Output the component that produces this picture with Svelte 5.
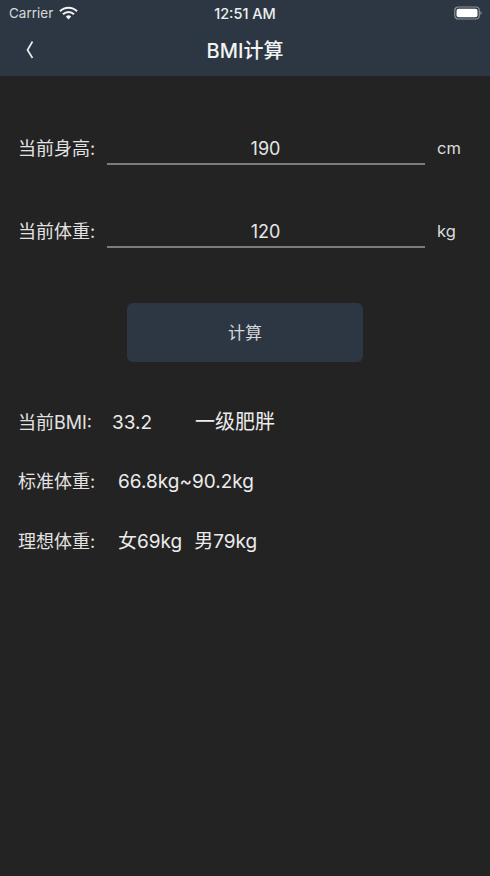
<script>
    let height = "190";
    let weight = "120";

    const results = [
        { label: "当前BMI:", value: "33.2", note: "一级肥胖", labelWidth: 94 },
        { label: "标准体重:", value: "66.8kg~90.2kg", labelWidth: 100 },
        { label: "理想体重:", value: "女69kg", note: "男79kg", labelWidth: 100 },
    ];
</script>

<div class="page">
    <header class="top">
        <div class="status">
            <div class="carrier">
                Carrier
                <svg width="19" height="14" viewBox="0 0 19 14">
                    <path d="M1 5.2a12 12 0 0 1 17 0" fill="none" stroke="#f2f3f4" stroke-width="2"/>
                    <path d="M4 8.2a7.8 7.8 0 0 1 11 0" fill="none" stroke="#f2f3f4" stroke-width="2"/>
                    <path d="M6.8 10.6a3.8 3.8 0 0 1 5.4 0L9.5 13.4z" fill="#f2f3f4"/>
                </svg>
            </div>
            <div class="time">12:51 AM</div>
            <svg class="battery" width="28" height="14" viewBox="0 0 28 14">
                <rect x="0.75" y="1" width="24.5" height="12" rx="3.5" fill="none" stroke="#8d959c" stroke-width="1.2"/>
                <rect x="2.5" y="2.7" width="21" height="8.6" rx="2" fill="#fff"/>
                <path d="M26.4 5.2c.8.3 1.2 1 1.2 1.8s-.4 1.500-1.200 1.800z" fill="#8d959c"/>
            </svg>
        </div>
        <div class="nav">
            <svg class="back" width="12" height="20" viewBox="0 0 12 20">
                <path d="M8.500 1.500 3.500 10l5 8" fill="none" stroke="#e8eaec" stroke-width="1.700"/>
            </svg>
            <h1>BMI计算</h1>
        </div>
    </header>

    <main>
        <div class="field">
            <span class="name">当前身高:</span>
            <input bind:value={height} />
            <span class="unit">cm</span>
        </div>
        <div class="field second">
            <span class="name">当前体重:</span>
            <input bind:value={weight} />
            <span class="unit">kg</span>
        </div>

        <button>计算</button>

        <div class="results">
            {#each results as row, i}
                <div class="row">
                    <span class="name" style="width: {row.labelWidth}px">{row.label}</span>
                    <span class="value">{row.value}</span>
                    {#if row.note}
                        <span class="value" class:far={i === 0} class:near={i === 2}>{row.note}</span>
                    {/if}
                </div>
            {/each}
        </div>
    </main>
</div>

<style>
    :global(body) {
        margin: 0;
        background: #232323;
    }

    .page {
        width: 490px;
        height: 876px;
        overflow: hidden;
        background: #232323;
        color: #eeeeee;
        font-family: Inter, "Noto Sans CJK SC", sans-serif;
    }

    .top {
        height: 76px;
        background: #2d3743;
        box-sizing: border-box;
    }

    .status {
        height: 26px;
        display: flex;
        align-items: center;
        justify-content: space-between;
        padding: 0 8px 0 9px;
        position: relative;
        font-size: 13.500px;
        color: #edeff0;
    }

    .carrier {
        display: flex;
        align-items: center;
        gap: 6px;
        color: #d6d9dc;
    }

    .time {
        position: absolute;
        left: 0;
        right: 0;
        text-align: center;
        font-size: 14.500px;
        font-weight: 500;
    }

    .nav {
        height: 47px;
        position: relative;
        display: flex;
        align-items: center;
        justify-content: center;
    }

    .back {
        position: absolute;
        left: 24px;
        top: 14px;
    }

    h1 {
        margin: 0;
        font-size: 20px;
        font-weight: 500;
        color: #f2f3f4;
    }

    main {
        padding: 0 0 0 18px;
    }

    .field {
        display: flex;
        align-items: center;
        margin-top: 55px;
        height: 34px;
    }

    .second {
        margin-top: 49px;
    }

    .name {
        font-size: 18px;
        color: #e2e2e2;
    }

    .field .name {
        width: 89px;
        padding-bottom: 3px;
    }

    input {
        width: 318px;
        height: 34px;
        box-sizing: border-box;
        padding: 3px 1px 0 0;
        background: none;
        border: 0;
        border-bottom: 2px solid #7c7c7c;
        outline: none;
        text-align: center;
        font: inherit;
        font-size: 18px;
        color: #e6e6e6;
    }

    .unit {
        margin-left: 12px;
        font-size: 16.500px;
        color: #dddddd;
    }

    button {
        display: block;
        width: 236px;
        height: 59px;
        margin: 55px 0 0 109px;
        padding: 0 0 3px;
        border: 0;
        border-radius: 6px;
        background: #2d3743;
        font: inherit;
        font-size: 17px;
        color: #d5d8da;
    }

    .results {
        margin-top: 45px;
        display: flex;
        flex-direction: column;
        gap: 30px;
    }

    .row {
        display: flex;
        align-items: baseline;
        height: 30px;
        line-height: 30px;
    }

    .value {
        font-size: 19px;
        color: #ececec;
    }

    .far {
        margin-left: 43px;
        font-size: 20px;
    }

    .near {
        margin-left: 12px;
    }
</style>
